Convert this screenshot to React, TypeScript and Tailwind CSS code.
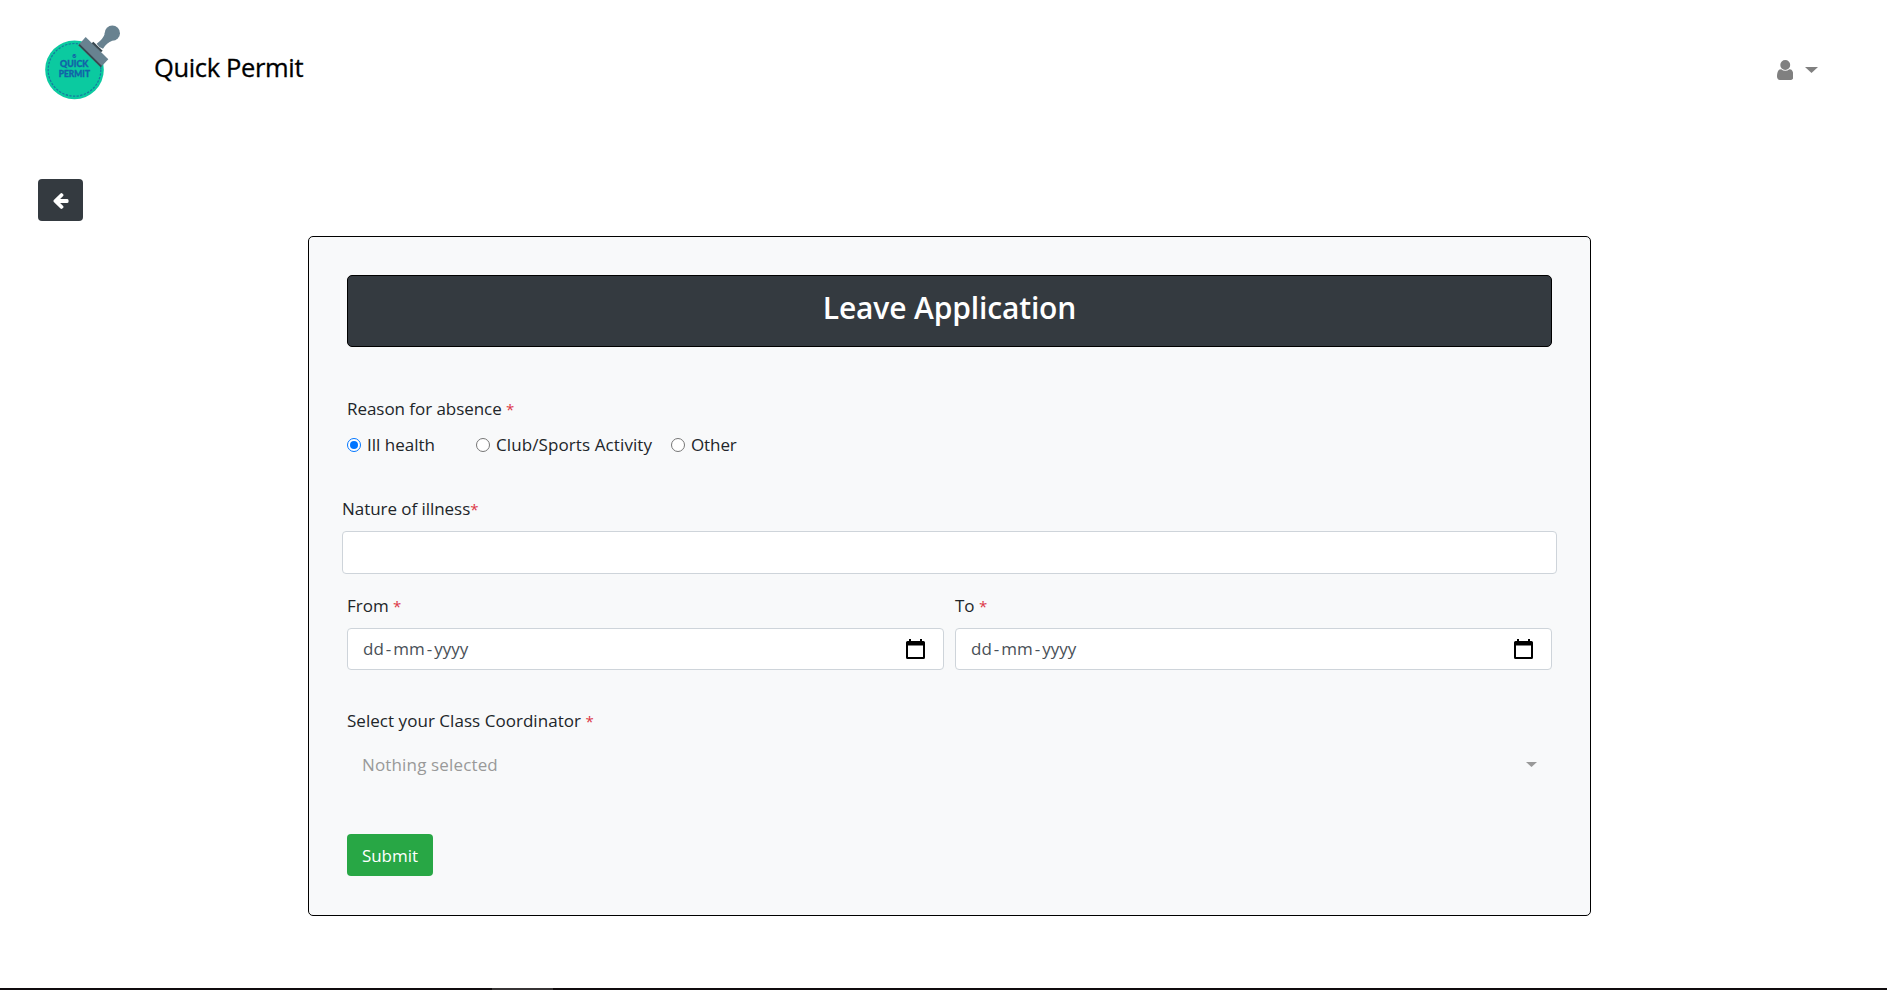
import React from "react";

function Logo() {
  return (
    <svg width="82" height="80" viewBox="30 18 246 240" aria-label="Quick Permit logo">
      <circle cx="133.5" cy="164.5" r="88" fill="#0bcaa0" />
      <circle cx="133.5" cy="164.5" r="79" fill="none" stroke="#1878a0" strokeWidth="3.6" strokeDasharray="7 4" />
      <circle cx="133" cy="123" r="6" fill="#1262a8" />
      <path d="M129 122l4 4 7-8" fill="none" stroke="#0bcaa0" strokeWidth="2" />
      <text x="90" y="155" textLength="85" lengthAdjust="spacingAndGlyphs" fontFamily="Lato, sans-serif" fontWeight="900" fontSize="29" fill="#1262a8" stroke="#1262a8" strokeWidth="1">QUICK</text>
      <text x="86" y="187" textLength="94" lengthAdjust="spacingAndGlyphs" fontFamily="Lato, sans-serif" fontWeight="900" fontSize="29" fill="#1262a8" stroke="#1262a8" strokeWidth="1">PERMIT</text>
      <path d="M167 66L235 133L212 157L145 91Z" fill="#688290" />
      <path d="M149 87L216 153L212 157L145 91Z" fill="#37474f" />
      <path d="M190 80L218 107L213 112L185 85Z" fill="#37474f" />
      <path d="M225 55L247 77Q230 83 219 101L208 96L200 86Q219 74 225 55Z" fill="#688290" />
      <circle cx="247" cy="54.500" r="23" fill="#688290" />
    </svg>
  );
}

function UserIcon() {
  return (
    <svg width="16.500" height="20" viewBox="256 128 1280 1536" preserveAspectRatio="none" fill="#808080">
      <path d="M1536 1399q0 109-62.5 187t-150.5 78h-854q-88 0-150.500-78t-62.500-187q0-85 8.500-160.500t31.500-152 58.500-131 94-89 134.500-34.500q131 128 313 128t313-128q76 0 134.500 34.500t94 89 58.500 131 31.500 152 8.500 160.500zm-256-887q0 159-112.500 271.500t-271.500 112.500-271.500-112.500-112.500-271.500 112.500-271.500 271.500-112.500 271.500 112.500 112.500 271.500z" />
    </svg>
  );
}

function ArrowLeft() {
  return (
    <svg width="16" height="16" viewBox="64 181 1472 1558" fill="#fff" className="mt-0.5">
      <path d="M1536 896v128q0 53-32.500 90.500t-84.500 37.500h-704l293 294q38 36 38 90t-38 90l-75 76q-37 37-90 37-52 0-91-37l-651-652q-37-37-37-90 0-52 37-91l651-650q38-38 91-38 52 0 90 38l75 74q38 38 38 91t-38 91l-293 293h704q52 0 84.500 37.500t32.500 90.500z" />
    </svg>
  );
}

function Calendar() {
  return (
    <svg width="19" height="20" viewBox="0 0 19 20" className="shrink-0">
      <path fillRule="evenodd" d="M3 0h2v2h9V0h2v2h1.500A1.500 1.500 0 0 1 19 3.500v15a1.500 1.500 0 0 1-1.500 1.500h-16A1.500 1.500 0 0 1 0 18.500v-15A1.500 1.500 0 0 1 1.500 2H3zM2 6.500v11.500h15V6.500z" fill="#000" />
    </svg>
  );
}

function Caret({ width, height, color }: { width: number; height: number; color: string }) {
  return (
    <svg width={width} height={height} viewBox="0 0 12 6" preserveAspectRatio="none" fill={color}>
      <path d="M0 0h12L6 6z" />
    </svg>
  );
}

const Star = () => <span className="text-[15px] text-[#dc3545]">*</span>;

function Radio({ label, checked = false, className, tracking }: { label: string; checked?: boolean; className: string; tracking: string }) {
  return (
    <label className={`flex items-center ${className}`}>
      <span className={`mr-1.5 flex size-3.5 shrink-0 items-center justify-center rounded-full border bg-white ${checked ? "border-[#0075ff]" : "border-[#767676]"}`}>
        {checked && <span className="size-2 rounded-full bg-[#0075ff]" />}
      </span>
      <span className={tracking}>{label}</span>
    </label>
  );
}

function DateField({ label }: { label: string }) {
  return (
    <div className="flex-1">
      <div className="mb-2.5 h-6">{label} <Star /></div>
      <div className="flex h-[42px] items-center justify-between rounded border border-[#ced4da] bg-white pl-[15px] pr-[18px] text-[#495057]">
        <span>dd<span className="mx-0.5">-</span>mm<span className="mx-0.5">-</span>yyyy</span>
        <Calendar />
      </div>
    </div>
  );
}

export default function App() {
  return (
    <div className="flex h-[990px] w-full flex-col overflow-hidden bg-white font-['Open_Sans','Noto_Sans',sans-serif] text-[17px] leading-6 text-[#212529]">
      <header className="flex h-[134px] items-start pl-10 pr-[69px] pt-[21px]">
        <Logo />
        <h1 className="ml-8 mt-[25px] whitespace-nowrap text-[25.5px] font-medium leading-[42px] tracking-[-0.35px] text-black [-webkit-text-stroke:0.3px_#000]">Quick Permit</h1>
        <div className="ml-auto mt-[39px] flex items-center gap-3">
          <UserIcon />
          <Caret width={13} height={6} color="#808080" />
        </div>
      </header>
      <div className="pl-[38px] pt-[45px]">
        <button className="flex h-[42px] w-[45px] items-center justify-center rounded bg-[#343a40]"><ArrowLeft /></button>
      </div>
      <main className="ml-[308px] mt-[15px] h-[680px] w-[1283px] rounded-[5px] border border-black bg-[#f8f9fa] px-[38px] pt-[38px]">
        <div className="h-[72px] rounded-[5px] border border-black bg-[#343a40] pt-3 text-center text-[30px] font-semibold leading-[40px] tracking-[-0.15px] text-white">Leave Application</div>
        <div className="mt-[50px] h-6 tracking-[-0.05px]">Reason for absence <Star /></div>
        <div className="mt-3 flex h-6">
          <Radio label="Ill health" checked className="w-[129px]" tracking="tracking-[0px]" />
          <Radio label="Club/Sports Activity" className="w-[195px]" tracking="tracking-[0.1px]" />
          <Radio label="Other" className="" tracking="tracking-[-0.1px]" />
        </div>
        <div className="-mx-[5px] mt-10">
          <div className="h-6 tracking-[-0.05px]">Nature of illness<Star /></div>
          <div className="mt-2.5 h-[43px] rounded border border-[#ced4da] bg-white" />
        </div>
        <div className="mt-5 flex gap-[11px]">
          <DateField label="From" />
          <DateField label="To" />
        </div>
        <div className="mt-[39px] h-6 tracking-[0.04px]">Select your Class Coordinator <Star /></div>
        <div className="mt-2.5 flex h-[42px] items-center justify-between pl-[15px] pr-[15px] text-[#999]">
          <span className="pt-0.5 tracking-[0.15px]">Nothing selected</span>
          <Caret width={11} height={5} color="#999999" />
        </div>
        <button className="mt-[49px] flex h-[42px] w-[86px] items-center justify-center rounded bg-[#28a745] pt-px text-white">Submit</button>
      </main>
      <div className="mt-auto h-0.5 shrink-0 bg-[#100c0e] pl-[492px]">
        <div className="h-0.5 w-[61px] bg-[#373435]" />
      </div>
    </div>
  );
}
